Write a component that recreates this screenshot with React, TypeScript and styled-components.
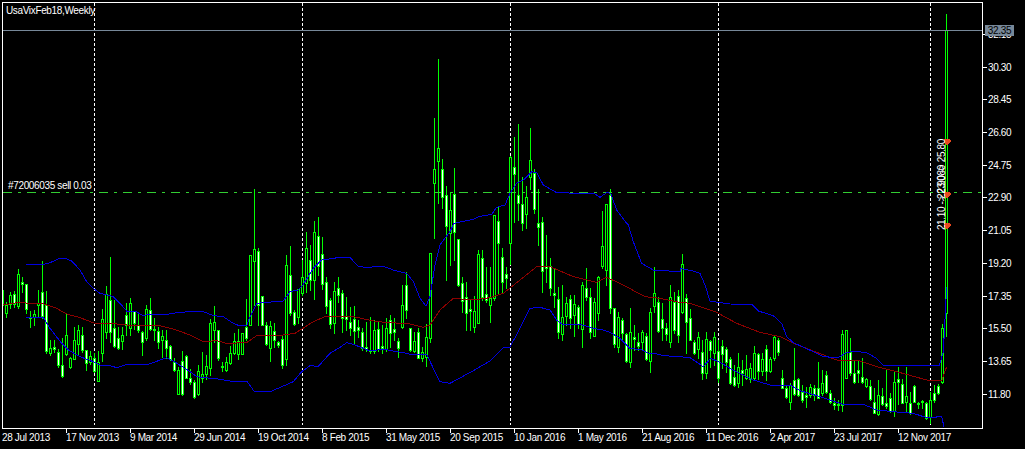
import React from 'react'
import styled, { createGlobalStyle } from 'styled-components'

const WICK = '#00ff00'
const BAND = '#0000e0'
const AVERAGE = '#8b0000'

// one row per bar, 4px apart from x=2: [high, bodyTop, bodyBottom, low, white body]
const BARS: number[][] = [
  [290,290,305,305,0],[302,305,313,317,0],[292,295,304,308,0],[291,294,304,307,1],[269,274,306,308,0],
  [277,282,284,292,1],[284,284,309,313,1],[311,317,318,327,1],[310,314,317,325,0],[290,303,305,317,0],
  [261,292,316,318,1],[291,305,351,353,1],[340,348,353,355,0],[340,347,349,352,1],[349,352,365,367,1],
  [338,365,376,377,1],[314,335,354,355,0],[357,358,367,368,0],[327,340,359,359,0],[325,330,344,355,0],
  [327,335,350,352,1],[350,350,363,370,1],[351,356,362,364,0],[353,358,371,372,1],[351,362,381,378,0],
  [309,319,353,361,0],[286,294,332,338,0],[257,300,332,342,1],[300,328,346,347,1],[327,338,348,349,1],
  [327,335,341,349,0],[303,315,325,335,1],[298,303,328,335,0],[311,311,323,329,1],[314,325,330,332,1],
  [331,332,342,355,1],[305,309,338,340,0],[298,310,329,330,1],[318,329,330,340,1],[327,331,342,348,1],
  [330,336,340,357,0],[330,340,348,358,1],[345,346,359,360,1],[358,362,370,371,1],[367,370,394,394,0],
  [351,361,394,395,1],[355,356,378,378,1],[369,378,382,384,1],[380,382,397,398,1],[365,371,394,395,0],
  [352,374,378,382,0],[355,366,374,379,0],[319,323,368,375,0],[306,322,330,342,0],[330,330,358,360,1],
  [362,366,367,371,1],[357,362,370,371,0],[346,353,363,364,0],[333,341,353,354,0],[329,341,354,359,0],
  [333,333,354,354,0],[299,327,338,340,1],[255,255,325,325,0],[189,249,261,305,0],[248,251,305,325,1],
  [296,296,325,325,1],[322,325,344,345,1],[321,326,348,361,0],[323,331,340,347,1],[341,342,345,347,1],
  [335,339,365,368,1],[255,265,359,365,0],[246,275,313,315,1],[310,312,324,325,1],[289,289,317,323,0],
  [260,277,293,295,0],[232,248,283,292,0],[245,260,280,290,1],[221,232,280,299,0],[217,236,266,275,1],
  [237,254,284,289,1],[277,282,306,313,1],[298,300,324,328,1],[282,291,323,333,0],[277,288,295,302,1],
  [290,293,318,332,1],[297,316,319,330,1],[307,322,328,335,1],[306,319,331,343,1],[320,327,330,337,1],
  [328,332,348,350,1],[322,347,349,351,1],[317,350,351,353,1],[320,330,351,353,0],[322,329,349,351,1],
  [325,346,348,353,1],[318,328,349,351,0],[315,320,333,347,1],[318,329,332,340,1],[338,341,348,357,1],
  [285,305,327,328,0],[272,285,310,318,1],[328,328,350,351,1],[332,341,351,352,0],[328,332,358,358,1],
  [347,352,358,361,0],[324,337,357,366,0],[253,253,338,342,0],[118,169,183,238,0],[59,148,161,203,0],
  [159,169,197,208,1],[186,195,226,280,1],[192,210,233,265,0],[168,194,232,260,1],[239,239,285,286,1],
  [277,283,301,312,1],[282,297,313,330,1],[300,309,311,330,1],[296,311,327,332,0],[250,254,323,323,0],
  [250,258,297,300,1],[267,294,300,302,1],[267,298,305,322,0],[215,215,298,300,0],[207,221,243,293,1],
  [248,257,282,292,1],[267,274,278,288,1],[156,157,243,264,0],[137,167,174,222,1],[124,195,203,220,1],
  [177,204,223,230,1],[186,197,214,228,0],[128,160,177,189,0],[169,173,209,213,1],[189,223,227,245,1],
  [217,222,271,292,1],[235,266,268,282,1],[258,266,288,295,1],[268,293,295,307,1],[287,299,332,338,1],
  [285,317,334,340,0],[297,303,316,325,0],[295,299,318,328,1],[295,304,315,336,0],[305,307,324,328,1],
  [282,285,329,347,0],[268,288,297,300,1],[288,297,332,338,1],[298,302,336,336,0],[276,277,313,320,0],
  [211,246,266,268,0],[204,204,270,285,0],[189,195,308,313,1],[308,308,344,347,1],[312,317,347,352,0],
  [318,320,333,340,1],[333,334,361,362,1],[308,332,362,367,0],[325,337,339,350,1],[333,342,346,350,1],
  [330,332,342,350,0],[333,336,359,360,1],[308,312,361,372,0],[267,293,306,312,0],[297,302,331,332,1],
  [303,319,328,340,1],[323,328,334,340,1],[285,297,342,347,0],[292,302,330,333,1],[290,296,335,342,1],
  [254,264,312,313,0],[294,298,322,353,1],[309,318,340,340,1],[340,342,353,354,1],[332,337,349,358,0],
  [340,352,373,379,1],[332,339,373,378,0],[340,341,350,367,1],[332,337,353,365,0],[340,351,378,382,1],
  [340,346,354,368,1],[347,349,362,372,1],[357,359,383,384,1],[365,377,385,386,1],[353,367,383,387,0],
  [360,370,373,385,1],[355,369,378,379,0],[363,368,379,382,0],[346,353,378,380,0],[353,354,371,379,1],
  [353,359,371,375,0],[345,349,371,380,1],[357,359,371,372,0],[335,337,358,360,0],[338,340,352,355,1],
  [370,378,388,388,1],[385,388,397,398,1],[383,385,402,409,0],[348,380,394,395,1],[378,379,395,396,1],
  [385,392,400,402,1],[387,395,397,407,1],[384,387,395,397,0],[385,388,395,400,1],[362,388,398,398,1],
  [370,383,393,395,0],[371,375,392,393,1],[390,393,402,403,1],[398,403,405,409,1],[400,404,405,410,1],
  [330,334,405,411,0],[330,330,378,378,0],[338,352,373,375,1],[360,373,382,383,1],[360,370,373,382,1],
  [358,377,382,383,1],[378,379,386,387,0],[380,386,399,400,1],[388,402,413,413,1],[380,395,414,415,0],
  [388,396,404,405,1],[370,403,406,408,1],[393,398,411,412,1],[371,382,411,416,0],[367,379,382,404,1],
  [379,384,403,403,1],[367,396,402,411,0],[392,403,413,414,1],[385,386,402,402,1],[402,403,404,408,1],
  [400,401,402,408,1],[402,403,418,419,1],[392,400,417,423,0],[385,393,400,402,1],[384,386,393,394,1],
  [324,328,382,383,0],[14,30,313,336,0],
]

// lines were read off the chart in 3x crops, so each run is [left, top, points at 3x]
type Run = [number, number, number[]]

const path = (runs: Run[]) =>
  runs
    .flatMap(([left, top, pts]) =>
      pts.reduce<string[]>((out, v, i) => {
        if (i % 2) out.push(`${left + pts[i - 1] / 3},${top + v / 3}`)
        return out
      }, [])
    )
    .join(' ')

const UPPER = path([
  [0, 225, [78,118,130,118,150,113,175,102,195,100,215,108,240,135,260,170,280,190,300,205,320,210,340,215,360,235,380,258,405,258,430,272,445,268,500,268,530,263,570,260,610,260,640,272,670,275,700,295,720,303,740,302,750,275,770,235,800,232,850,228,870,200,895,195,910,178,940,130,965,105,1000,100]],
  [340, 225, [0,97,30,97,55,125,80,127,130,124,160,135,200,145,220,170,240,220,258,243,270,215,285,120,300,60,330,20]],
  [340, 0, [342,670,400,658,415,650,455,643,470,622,495,615,510,580,530,550,550,540,575,515,590,518,610,555,650,578,720,580,765,582,780,592,800,578,812,580,830,630,860,670]],
  [340, 225, [865,0,880,50,905,115,940,135,1020,140]],
  [680, 225, [0,130,40,138,60,145,75,180,90,228,115,232,150,237,215,238,235,258,280,272,305,295,320,335,340,353,395,378,430,395,475,398,495,385,520,378,560,383,590,400,610,422,750,423,778,422,790,380,800,185]],
])

const LOWER = path([
  [0, 225, [78,277,130,277,150,310,185,355,205,375,240,395,280,410,300,420,330,422,350,428,380,418,440,420,500,398,520,408,570,440,590,455,610,458,640,460,690,468,740,468,762,498,815,498,850,483,880,470,905,440,930,422,955,424,990,385,1020,367]],
  [340, 225, [20,353,40,358,70,370,90,378,130,372,160,378,200,385,220,390,260,388,280,430,300,470,330,475,400,437,450,408,490,368,510,366,540,310,570,250,600,247,630,255,650,285,665,297,720,298,760,310,790,315,810,322,840,340,870,370,905,375,925,385,945,385,970,392,1020,395]],
  [680, 225, [30,398,70,425,92,400,120,412,150,430,220,465,270,480,330,480,360,497,420,515,450,525,490,538,550,538,590,555,640,560,700,565,740,578,785,575,792,605]],
])

const MIDDLE = path([
  [0, 225, [10,240,50,233,130,236,170,250,200,267,240,278,290,297,330,295,380,300,470,300,520,312,570,330,610,350,650,347,680,355,740,353,770,332,850,330,885,325,940,290,975,275,1020,275]],
  [340, 225, [40,275,110,290,210,297,250,307,270,300,300,255,340,220,400,225,450,218,490,205,540,165,590,125,630,125,700,155,770,172,800,157,840,175,915,215,960,220,1020,232]],
  [680, 225, [30,235,110,262,170,295,240,322,300,335,340,355,400,378,470,405,540,408,590,425,650,440,740,465,785,468,800,425]],
])

const YEAR_LINES = [94, 302, 510, 718, 930]
const TRADE_MARKS = [142, 195, 226]
const PRICES = ['32.15', '30.30', '28.45', '26.60', '24.75', '22.90', '21.05', '19.20', '17.35', '15.50', '13.65', '11.80']
const DATES = [
  '28 Jul 2013', '17 Nov 2013', '9 Mar 2014', '29 Jun 2014', '19 Oct 2014', '8 Feb 2015', '31 May 2015', '20 Sep 2015',
  '10 Jan 2016', '1 May 2016', '21 Aug 2016', '11 Dec 2016', '2 Apr 2017', '23 Jul 2017', '12 Nov 2017',
]

const GlobalStyle = createGlobalStyle`
  html, body {
    margin: 0;
    background: #000;
  }
`

const Terminal = styled.div`
  width: 1025px;
  height: 449px;
  box-sizing: border-box;
  padding: 2px 0 0 2px;
  background: #000;
  color: #fff;
  overflow: hidden;
  display: grid;
  grid-template-columns: 981px 1fr;
  grid-template-rows: 427px 1fr;
  font: 10px/11px 'Liberation Sans', Arial, sans-serif;
  letter-spacing: -0.35px;
`

const Plot = styled.div`
  position: relative;
  border: 1px solid #fff;
  box-sizing: border-box;
`

const ChartSvg = styled.svg`
  display: block;
  shape-rendering: crispEdges;
`

const SymbolLabel = styled.span`
  position: absolute;
  left: 3px;
  top: 2px;
  white-space: nowrap;
`

const OrderLabel = styled.span`
  position: absolute;
  left: 5px;
  top: 177px;
  white-space: nowrap;
`

const TradeLabel = styled.span<{ $bottom: number }>`
  position: absolute;
  left: 933px;
  bottom: ${p => p.$bottom}px;
  white-space: nowrap;
  writing-mode: vertical-rl;
  transform: rotate(180deg);
`

const PriceAxis = styled.div`
  position: relative;
  padding-top: 16px;
  display: flex;
  flex-direction: column;
`

const PriceTick = styled.div`
  height: 32.73px;
  flex: none;
  display: flex;
  align-items: center;
  gap: 1px;

  &::before {
    content: '';
    width: 4px;
    height: 1px;
    background: #fff;
  }
`

const BidLabel = styled.div`
  position: absolute;
  left: 2px;
  top: 23px;
  width: 29px;
  height: 11px;
  background: #778899;
  color: #000;
  text-align: center;
`

const TimeAxis = styled.div`
  grid-column: 1 / 3;
  display: flex;
`

const TimeMark = styled.div<{ $first: boolean }>`
  position: relative;
  flex: none;
  width: 64px;
  padding-top: 3px;
  white-space: nowrap;

  &::before {
    content: '';
    display: ${p => (p.$first ? 'none' : 'block')};
    position: absolute;
    left: 0;
    top: 0;
    width: 1px;
    height: 4px;
    background: #fff;
  }
`

const Candle = ({ bar, x }: { bar: number[]; x: number }) => {
  const [high, top, bottom, low, white] = bar
  return (
    <g>
      <rect x={x} y={high} width={1} height={Math.max(low, bottom) - high + 1} fill={WICK} />
      <rect x={x - 1} y={top} width={3} height={bottom - top + 1} fill={WICK} />
      {bottom - top > 1 && (
        <rect x={x} y={top + 1} width={1} height={bottom - top - 1} fill={white ? '#fff' : '#000'} />
      )}
    </g>
  )
}

const Chart = () => (
  <ChartSvg width={979} height={425} viewBox="3 3 979 425">
    {YEAR_LINES.map(x => (
      <line key={x} x1={x + 0.5} x2={x + 0.5} y1={3} y2={425} stroke="#fff" strokeDasharray="3 2" />
    ))}
    <line x1={3} x2={982} y1={192.5} y2={192.5} stroke="#32cd32" strokeDasharray="9 6 3 6" />
    {BARS.map((bar, i) => (
      <Candle key={i} bar={bar} x={2 + i * 4} />
    ))}
    <polyline points={MIDDLE} fill="none" stroke={AVERAGE} />
    <polyline points={UPPER} fill="none" stroke={BAND} />
    <polyline points={LOWER} fill="none" stroke={BAND} />
    <line x1={3} x2={982} y1={30.5} y2={30.5} stroke="#778899" />
    {TRADE_MARKS.map(y => (
      <path
        key={y}
        transform={`translate(946 ${y})`}
        d="M-2 -3H4L5 -1L1 3H0L-2 0Z"
        fill="#e8481f"
      />
    ))}
  </ChartSvg>
)

const App = () => (
  <>
    <GlobalStyle />
    <Terminal>
      <Plot>
        <Chart />
        <SymbolLabel>UsaVixFeb18,Weekly</SymbolLabel>
        <OrderLabel>#72006035 sell 0.03</OrderLabel>
        <TradeLabel $bottom={198}>21.10 -&gt; 23.080</TradeLabel>
        <TradeLabel $bottom={229}>22.90 -&gt; 25.80</TradeLabel>
      </Plot>
      <PriceAxis>
        {PRICES.map(price => (
          <PriceTick key={price}>{price}</PriceTick>
        ))}
        <BidLabel>32.35</BidLabel>
      </PriceAxis>
      <TimeAxis>
        {DATES.map((date, i) => (
          <TimeMark key={date} $first={i === 0}>
            {date}
          </TimeMark>
        ))}
      </TimeAxis>
    </Terminal>
  </>
)

export default App
